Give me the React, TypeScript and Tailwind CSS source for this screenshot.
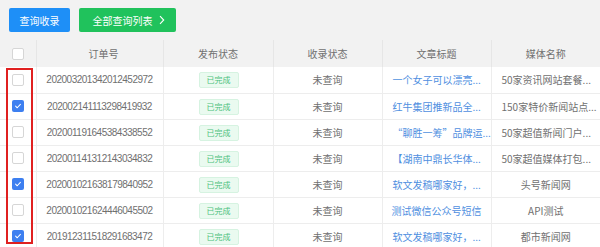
import React from 'react';

interface OrderRow {
  id: string;
  checked: boolean;
  title: string;
  media: string;
  mediaCenter?: boolean;
  titleCenter?: boolean;
}

const rows: OrderRow[] = [
  { id: '202003201342012452972', checked: false, title: '一个女子可以漂亮...', media: '50家资讯网站套餐...' },
  { id: '202002141113298419932', checked: true, title: '红牛集团推新品全...', media: '150家特价新闻站点...' },
  { id: '202001191645384338552', checked: false, title: '“聊胜一筹”品牌运...', media: '50家超值新闻门户...' },
  { id: '202001141312143034832', checked: false, title: '【湖南中鼎长华体...', media: '50家超值媒体打包...' },
  { id: '202001021638179840952', checked: true, title: '软文发稿哪家好，...', media: '头号新闻网', mediaCenter: true },
  { id: '202001021624446045502', checked: false, title: '测试微信公众号短信', media: 'API测试', mediaCenter: true, titleCenter: true },
  { id: '201912311518291683472', checked: true, title: '软文发稿哪家好，...', media: '都市新闻网', mediaCenter: true },
];

function Checkbox({ checked }: { checked: boolean }) {
  if (checked) {
    return (
      <span className="inline-flex h-[12px] w-[12px] items-center justify-center rounded-[2px] bg-[#3d7ff0]">
        <svg width="8" height="8" viewBox="0 0 10 10" fill="none">
          <path d="M2 5.2l2 2L8 3" stroke="white" strokeWidth="1.3" strokeLinecap="round" strokeLinejoin="round" />
        </svg>
      </span>
    );
  }
  return <span className="inline-block h-[12px] w-[12px] rounded-[2px] border border-[#d6d6d6] bg-white" />;
}

export default function App() {
  return (
    <div className="h-[247px] w-[600px] overflow-hidden bg-white font-['Noto_Sans_CJK_SC','Liberation_Sans',sans-serif] text-[10px] text-[#707070]">
      {/* toolbar */}
      <div className="flex h-[40px] items-start gap-[9px] bg-[#f2f2f2] pl-[9px] pt-[8px]">
        <button className="h-[24px] w-[61px] rounded-[2px] bg-[#1e8ff7] text-[10px] text-white">查询收录</button>
        <button className="flex h-[24px] w-[97px] items-center justify-center gap-[6px] rounded-[2px] bg-[#20c25c] pl-[2px] text-[10px] text-white">
          全部查询列表
          <svg width="6" height="10" viewBox="0 0 7 11" fill="none">
            <path d="M1.2 1l4.3 4.5L1.2 10" stroke="white" strokeWidth="1.3" />
          </svg>
        </button>
      </div>

      <div className="relative">
        <table className="w-[600px] table-fixed border-collapse">
          <colgroup>
            <col className="w-[36px]" />
            <col className="w-[127px]" />
            <col className="w-[110px]" />
            <col className="w-[109px]" />
            <col className="w-[109px]" />
            <col className="w-[109px]" />
          </colgroup>
          <thead>
            <tr className="h-[27px] bg-[#f2f2f2] text-[#707070]">
              <th className="border-r border-[#e6e6e6] p-0 font-normal">
                <div className="flex justify-center pt-[1px]">
                  <Checkbox checked={false} />
                </div>
              </th>
              <th className="border-r border-[#e6e6e6] pl-[8px] font-normal">订单号</th>
              <th className="border-r border-[#e6e6e6] font-normal">发布状态</th>
              <th className="border-r border-[#e6e6e6] font-normal">收录状态</th>
              <th className="border-r border-[#e6e6e6] font-normal">文章标题</th>
              <th className="font-normal">媒体名称</th>
            </tr>
          </thead>
          <tbody>
            {rows.map((row) => (
              <tr key={row.id} className="h-[26px] border-b border-[#ededed]">
                <td className="border-r border-[#ededed] p-0">
                  <div className="flex justify-center">
                    <Checkbox checked={row.checked} />
                  </div>
                </td>
                <td className="border-r border-[#ededed] text-center font-['Liberation_Sans',sans-serif] text-[10px] tracking-[-0.5px] text-[#707070]">
                  {row.id}
                </td>
                <td className="border-r border-[#ededed] pl-[35px]">
                  <span className="inline-flex h-[16px] w-[40px] items-center justify-center rounded-[2px] border border-[#d6f3e1] bg-[#eafaf0] text-[8px] text-[#4cc17c]">
                    已完成
                  </span>
                </td>
                <td className="border-r border-[#ededed] text-center text-[#707070]">未查询</td>
                <td className={`overflow-hidden whitespace-nowrap border-r border-[#ededed] text-[#4f8fdf] ${row.titleCenter ? 'text-center' : 'pl-[10px]'}`}>
                  {row.title}
                </td>
                <td className={`overflow-hidden whitespace-nowrap text-[#707070] ${row.mediaCenter ? 'text-center' : 'pl-[10px]'}`}>{row.media}</td>
              </tr>
            ))}
          </tbody>
        </table>
        {/* highlight box around checkbox column */}
        <div className="pointer-events-none absolute left-[6px] top-[28px] h-[176px] w-[27px] border-2 border-[#e02020]" />
      </div>
    </div>
  );
}
